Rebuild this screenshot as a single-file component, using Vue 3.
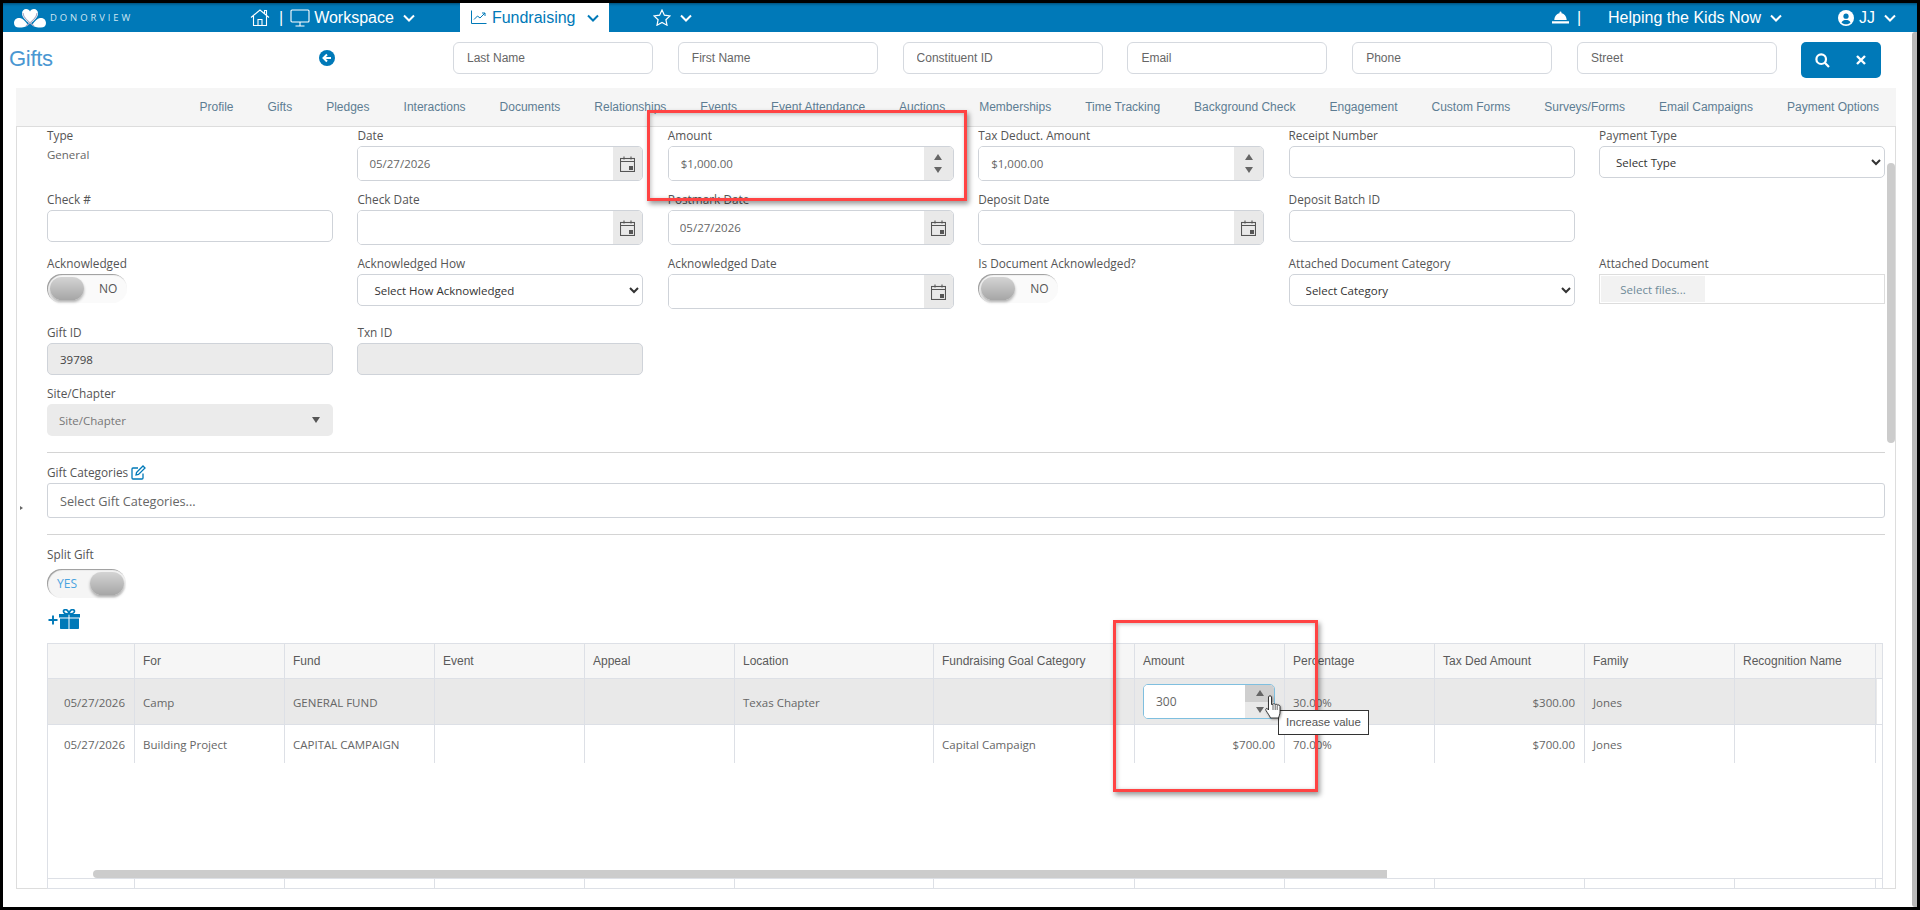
<script setup>
const searchFields = ['Last Name', 'First Name', 'Constituent ID', 'Email', 'Phone', 'Street'];

const tabs = [
  'Profile', 'Gifts', 'Pledges', 'Interactions', 'Documents', 'Relationships', 'Events',
  'Event Attendance', 'Auctions', 'Memberships', 'Time Tracking', 'Background Check',
  'Engagement', 'Custom Forms', 'Surveys/Forms', 'Email Campaigns', 'Payment Options',
];

const fields = [
  { label: 'Type', type: 'text', value: 'General' },
  { label: 'Date', type: 'date', value: '05/27/2026' },
  { label: 'Amount', type: 'spin', value: '$1,000.00' },
  { label: 'Tax Deduct. Amount', type: 'spin', value: '$1,000.00' },
  { label: 'Receipt Number', type: 'input', value: '' },
  { label: 'Payment Type', type: 'select', value: 'Select Type' },

  { label: 'Check #', type: 'input', value: '' },
  { label: 'Check Date', type: 'date', value: '' },
  { label: 'Postmark Date', type: 'date', value: '05/27/2026' },
  { label: 'Deposit Date', type: 'date', value: '' },
  { label: 'Deposit Batch ID', type: 'input', value: '' },
  { type: 'empty' },

  { label: 'Acknowledged', type: 'toggle', value: 'NO' },
  { label: 'Acknowledged How', type: 'select', value: 'Select How Acknowledged' },
  { label: 'Acknowledged Date', type: 'date', value: '' },
  { label: 'Is Document Acknowledged?', type: 'toggle', value: 'NO' },
  { label: 'Attached Document Category', type: 'select', value: 'Select Category' },
  { label: 'Attached Document', type: 'file' },

  { label: 'Gift ID', type: 'disabled', value: '39798' },
  { label: 'Txn ID', type: 'disabled', value: '' },
  { type: 'empty' }, { type: 'empty' }, { type: 'empty' }, { type: 'empty' },

  { label: 'Site/Chapter', type: 'site', value: 'Site/Chapter' },
];

const columns = ['', 'For', 'Fund', 'Event', 'Appeal', 'Location', 'Fundraising Goal Category', 'Amount', 'Percentage', 'Tax Ded Amount', 'Family', 'Recognition Name'];

const rows = [
  ['05/27/2026', 'Camp', 'GENERAL FUND', '', '', 'Texas Chapter', '', '', '30.00%', '$300.00', 'Jones', ''],
  ['05/27/2026', 'Building Project', 'CAPITAL CAMPAIGN', '', '', '', 'Capital Campaign', '$700.00', '70.00%', '$700.00', 'Jones', ''],
];

const rightAligned = [0, 7, 9];
</script>

<template>
  <div class="frame">
    <div class="screen">
      <nav class="nav">
        <div class="logo">
          <svg width="34" height="20" viewBox="0 0 34 20">
            <path d="M17 16C12 12 9 9 9 5.500C9 2.500 11 1 13 1C15 1 16.500 2 17 3.500C17.500 2 19 1 21 1C23 1 25 2.500 25 5.500C25 9 22 12 17 16Z" fill="#fff" />
            <path d="M1 15C1 11.500 4 9.500 7 10C10 10.500 12 13 15 17C13 19 10 19.500 6 19.500C3 19.500 1 18 1 15ZM33 15C33 11.500 30 9.500 27 10C24 10.500 22 13 19 17C21 19 24 19.500 28 19.500C31 19.500 33 18 33 15Z" fill="#fff" />
            <path d="M10 5C10 9 14 13 21 18M24 5C24 9 20 13 13 18" fill="none" stroke="#a9a9c4" stroke-width="1.100" />
          </svg>
          <span class="logo-text">DONORVIEW</span>
        </div>

        <svg class="home" width="20" height="19" viewBox="0 0 20 19" fill="none" stroke="#fff" stroke-width="1.100">
          <path d="M1 9.500L10 2L19 9.500M3.500 8V17.500H16.500V8M8 17.500V11.500H12V17.500M14.500 5.500V2.500H16.500V7" />
        </svg>
        <span class="sep">|</span>
        <svg class="monitor" width="20" height="18" viewBox="0 0 20 18" fill="none" stroke="#fff" stroke-width="1.100">
          <rect x="1" y="1" width="18" height="12" rx="1" />
          <path d="M10 13V16.500M5.500 17H14.500" />
        </svg>
        <span class="nav-text workspace">Workspace</span>
        <svg class="chev" width="12" height="8" viewBox="0 0 12 8"><path d="M1 1.500L6 6.500L11 1.500" fill="none" stroke="#fff" stroke-width="2" /></svg>

        <div class="active">
          <svg width="16" height="15" viewBox="0 0 16 15" fill="none" stroke="#0079b8" stroke-width="1">
            <path d="M.500 .500V13.500H15.500M3 9.500L6.500 6L9 8L14 3M11 3H14V6" />
          </svg>
          <span class="active-text">Fundraising</span>
          <svg width="12" height="8" viewBox="0 0 12 8"><path d="M1 1.500L6 6.500L11 1.500" fill="none" stroke="#0079b8" stroke-width="2" /></svg>
        </div>

        <svg class="star" width="18" height="17" viewBox="0 0 18 17">
          <path d="M9 1L11.400 6.200L17 6.900L12.900 10.700L14 16.200L9 13.500L4 16.200L5.100 10.700L1 6.900L6.600 6.200Z" fill="none" stroke="#fff" stroke-width="1.200" />
        </svg>
        <svg class="chev star-chev" width="12" height="8" viewBox="0 0 12 8"><path d="M1 1.500L6 6.500L11 1.500" fill="none" stroke="#fff" stroke-width="2" /></svg>

        <div class="nav-right">
          <svg width="17" height="13" viewBox="0 0 17 13" fill="#fff">
            <path d="M7.500 1.500a1 1 0 0 1 2 0V2.200C12.500 2.800 14.500 5.500 14.700 9H2.300C2.500 5.500 4.500 2.800 7.500 2.200ZM0 10.200H17V12.500H0Z" />
          </svg>
          <span class="sep right-sep">|</span>
          <span class="nav-text org">Helping the Kids Now</span>
          <svg class="chev" width="12" height="8" viewBox="0 0 12 8"><path d="M1 1.500L6 6.500L11 1.500" fill="none" stroke="#fff" stroke-width="2" /></svg>
          <svg class="user" width="16" height="16" viewBox="0 0 16 16">
            <circle cx="8" cy="8" r="8" fill="#fff" />
            <circle cx="8" cy="6.200" r="2.600" fill="#0079b8" />
            <path d="M3.500 12.500C4.500 10.500 6 10 8 10C10 10 11.500 10.500 12.500 12.500C11.500 13.700 10 14.300 8 14.300C6 14.300 4.500 13.700 3.500 12.500Z" fill="#0079b8" />
          </svg>
          <span class="nav-text jj">JJ</span>
          <svg class="chev" width="12" height="8" viewBox="0 0 12 8"><path d="M1 1.500L6 6.500L11 1.500" fill="none" stroke="#fff" stroke-width="2" /></svg>
        </div>
      </nav>

      <header class="head">
        <h1 class="title">Gifts</h1>
        <svg class="back" width="16" height="16" viewBox="0 0 16 16">
          <circle cx="8" cy="8" r="8" fill="#0079b8" />
          <path d="M12 8H5M8 4.500L4.500 8L8 11.500" fill="none" stroke="#fff" stroke-width="2" />
        </svg>
        <div class="search">
          <input v-for="name in searchFields" :key="name" class="search-input" :placeholder="name" />
        </div>
        <div class="search-btn">
          <svg width="15" height="15" viewBox="0 0 15 15" fill="none" stroke="#fff" stroke-width="2.200">
            <circle cx="6.200" cy="6.200" r="4.800" />
            <path d="M9.800 9.800L14 14" />
          </svg>
          <svg width="10" height="10" viewBox="0 0 10 10" fill="none" stroke="#fff" stroke-width="2.400">
            <path d="M1 1L9 9M9 1L1 9" />
          </svg>
        </div>
      </header>

      <div class="tabs">
        <span v-for="tab in tabs" :key="tab" class="tab">{{ tab }}</span>
      </div>

      <main class="panel">
        <span class="expander"></span>
        <div class="form">
          <div v-for="(field, i) in fields" :key="i" class="field">
            <template v-if="field.type !== 'empty'">
              <label class="label">{{ field.label }}</label>

              <div v-if="field.type === 'text'" class="static">{{ field.value }}</div>

              <input v-else-if="field.type === 'input'" class="ctl" :value="field.value" />

              <input v-else-if="field.type === 'disabled'" class="ctl disabled" :value="field.value" />

              <select v-else-if="field.type === 'select'" class="ctl sel">
                <option>{{ field.value }}</option>
              </select>

              <div v-else-if="field.type === 'date'" class="group">
                <input class="group-input" :value="field.value" />
                <span class="addon">
                  <svg width="15" height="16" viewBox="0 0 15 16" fill="none" stroke="#555" stroke-width="1.100">
                    <rect x=".5" y="2.500" width="14" height="13" />
                    <path d="M.5 5.500H14.500M4 .5V3.500M11 .5V3.500" />
                    <rect x="9" y="10" width="4" height="4" fill="#555" stroke="none" />
                  </svg>
                </span>
              </div>

              <div v-else-if="field.type === 'spin'" class="group">
                <input class="group-input money" :value="field.value" />
                <span class="addon spin">
                  <i class="up"></i>
                  <i class="down"></i>
                </span>
              </div>

              <div v-else-if="field.type === 'toggle'" class="toggle">
                <span class="knob"></span>
                <span class="toggle-text">{{ field.value }}</span>
              </div>

              <div v-else-if="field.type === 'file'" class="file">
                <span class="file-btn">Select files...</span>
              </div>

              <div v-else-if="field.type === 'site'" class="site">
                <span>{{ field.value }}</span>
                <i class="down site-arrow"></i>
              </div>
            </template>
          </div>
        </div>

        <hr class="rule rule-first" />

        <label class="label cat-label">
          Gift Categories
          <svg width="15" height="15" viewBox="0 0 15 15" fill="none" stroke="#0079b8" stroke-width="1.300">
            <path d="M12 8.500V13C12 13.600 11.600 14 11 14H2C1.400 14 1 13.600 1 13V4C1 3.400 1.400 3 2 3H7" />
            <path d="M5.500 7.500L12 1L14 3L7.500 9.500L5 10Z" />
          </svg>
        </label>
        <input class="ctl cat-input" placeholder="Select Gift Categories..." />

        <hr class="rule" />

        <label class="label split-label">Split Gift</label>
        <div class="toggle toggle-on">
          <span class="toggle-yes">YES</span>
          <span class="knob"></span>
        </div>

        <svg class="add-gift" width="32" height="20" viewBox="0 0 32 20" fill="#0079b8">
          <path d="M.5 11H9.500M5 6.500V15.500" fill="none" stroke="#0079b8" stroke-width="1.900" />
          <path d="M11 5H20.500V8.500H11ZM21.500 5H32V8.500H21.500ZM12 9.500H20.500V20H13C12.400 20 12 19.600 12 19ZM21.500 9.500H31V19C31 19.600 30.600 20 30 20H21.500Z" />
          <path d="M21 5C18 5 15.500 3.800 15.500 2.300C15.500 1.100 16.500 .7 17.500 .7C19.500 .7 20.500 2.500 21 5C21.500 2.500 22.500 .7 24.500 .7C25.500 .7 26.500 1.100 26.500 2.300C26.500 3.800 24 5 21 5" fill="none" stroke="#0079b8" stroke-width="1.700" />
        </svg>

        <div class="grid">
          <div class="grid-row grid-head">
            <div v-for="col in columns" :key="col" class="cell">{{ col }}</div>
            <div class="gutter"></div>
          </div>
          <div v-for="(row, r) in rows" :key="r" class="grid-row" :class="r === 0 ? 'row-edit' : 'row-plain'">
            <div v-for="(val, c) in row" :key="c" class="cell" :class="{ right: rightAligned.includes(c) }">
              <div v-if="r === 0 && c === 7" class="editor">
                <input class="editor-input" value="300" />
                <span class="editor-spin">
                  <span class="editor-up"><i class="up"></i></span>
                  <span class="editor-down"><i class="down"></i></span>
                </span>
              </div>
              <template v-else>{{ val }}</template>
            </div>
          </div>
          <div class="grid-fill"></div>
          <div class="grid-row grid-foot">
            <div v-for="col in columns" :key="col" class="cell"></div>
            <div class="gutter"></div>
          </div>
          <div class="hscroll"></div>
        </div>
      </main>

      <div class="vscroll-inner"></div>
      <div class="vscroll-main"></div>

      <div class="callout callout-form"></div>
      <div class="callout callout-table"></div>

      <div class="tooltip">Increase value</div>
      <svg class="hand" width="16" height="24" viewBox="0 0 16 24">
        <path d="M3.500 2C3.500 .4 6.500 .4 6.500 2V9.500L8 9.300C8.600 8.500 9.800 8.600 10.200 9.600C10.800 9 11.900 9.100 12.200 10.100C13 9.700 15 10 15 11.500V17C15 19.500 14 21 13.500 23H5.500C4.500 20.500 2.500 18 1 15.500C.2 14 1.500 12.800 2.500 13.800L3.500 15Z" fill="#fff" stroke="#222" stroke-width=".9" stroke-linejoin="round" />
        <path d="M8 10V15M10.200 10V15M12.200 10.500V15" fill="none" stroke="#222" stroke-width=".7" />
      </svg>
    </div>
  </div>
</template>

<style>
html, body {
  margin: 0;
  overflow: hidden;
  background: #000;
}
</style>

<style scoped>
.frame {
  width: 1920px;
  height: 910px;
  box-sizing: border-box;
  padding: 3px;
  background: #000;
  overflow: hidden;
}
.screen {
  position: relative;
  width: 1914px;
  height: 904px;
  background: #fff;
  overflow: hidden;
  font-family: "Open Sans", sans-serif;
  font-size: 11.5px;
  color: #666;
}
i {
  display: block;
}

/* top bar */
.nav {
  height: 29px;
  background: #0079b8;
  display: flex;
  align-items: center;
  color: #fff;
  font-family: "Liberation Sans", Arial, sans-serif;
  box-shadow: inset 0 3px 3px -2px rgba(0, 0, 0, .4);
}
.logo {
  width: 239px;
  padding-left: 10px;
  box-sizing: border-box;
  display: flex;
  align-items: center;
  gap: 3px;
  flex: none;
}
.logo-text {
  font-family: "Open Sans", sans-serif;
  font-size: 9.500px;
  letter-spacing: 2.900px;
  color: #cfe6f2;
}
.home {
  margin-left: 8px;
}
.sep {
  font-size: 16px;
  margin-left: 9px;
}
.monitor {
  margin-left: 7px;
}
.nav-text {
  font-size: 16px;
  white-space: nowrap;
}
.workspace {
  margin-left: 4px;
}
.chev {
  margin-left: 9px;
  flex: none;
}
.active {
  width: 149px;
  height: 29px;
  margin-left: 45px;
  padding-left: 11px;
  box-sizing: border-box;
  background: #fff;
  display: flex;
  align-items: center;
  color: #0079b8;
  font-size: 16px;
}
.active-text {
  margin: 0 11px 0 5px;
}
.star {
  margin-left: 44px;
}
.star-chev {
  margin-left: 9px;
}
.nav-right {
  margin-left: auto;
  margin-right: 21px;
  display: flex;
  align-items: center;
}
.right-sep {
  margin-left: 8px;
}
.org {
  margin-left: 27px;
}
.user {
  margin-left: 56px;
}
.jj {
  margin-left: 5px;
}

/* search header */
.head {
  height: 56px;
  padding-top: 10px;
  box-sizing: border-box;
  display: flex;
  align-items: flex-start;
  font-family: "Liberation Sans", Arial, sans-serif;
}
.title {
  margin: 4px 0 0 6px;
  width: 310px;
  font-size: 22px;
  font-weight: 400;
  line-height: 26px;
  letter-spacing: -.3px;
  color: #4a97d2;
}
.back {
  margin-top: 8px;
}
.search {
  margin-left: 118px;
  display: flex;
  gap: 24.800px;
}
.search-input {
  width: 200px;
  height: 32px;
  box-sizing: border-box;
  padding: 0 13px;
  border: 1px solid #d5d9df;
  border-radius: 6px;
  font: 12px "Liberation Sans", Arial, sans-serif;
  outline: none;
}
.search-input::placeholder {
  color: #666;
  opacity: 1;
}
.search-btn {
  width: 80px;
  height: 36px;
  margin-left: 24px;
  border-radius: 5px;
  background: #0079b8;
  display: flex;
  align-items: center;
  justify-content: center;
  gap: 26px;
}

/* tabs */
.tabs {
  height: 39px;
  margin: 0 21px 0 13px;
  padding: 0 17px 0 0;
  box-sizing: border-box;
  background: #f5f5f5;
  border-bottom: 1px solid #ddd;
  display: flex;
  align-items: center;
  justify-content: flex-end;
  gap: 34px;
  font-family: "Liberation Sans", Arial, sans-serif;
  font-size: 12px;
  color: #5d7d93;
}
.tab {
  white-space: nowrap;
}

/* panel */
.panel {
  position: relative;
  height: 762px;
  margin: 0 21px 0 13px;
  padding-left: 30px;
  padding-right: 10px;
  box-sizing: border-box;
  border: 1px solid #ddd;
  border-top: 0;
}
.expander {
  position: absolute;
  left: 3px;
  top: 379px;
  border-left: 3px solid #666;
  border-top: 2px solid transparent;
  border-bottom: 2px solid transparent;
}
.form {
  display: grid;
  grid-template-columns: repeat(6, 1fr);
  grid-template-rows: 64px 64px 69px 61px auto;
  column-gap: 24.400px;
  height: 309px;
}
.label {
  display: block;
  height: 16px;
  margin-bottom: 3px;
  line-height: 16px;
  font-size: 11.800px;
  font-weight: 500;
  color: #555;
  white-space: nowrap;
}
.static {
  line-height: 17px;
}
.ctl {
  display: block;
  width: 100%;
  height: 32px;
  box-sizing: border-box;
  padding: 0 12px;
  background: #fff;
  border: 1px solid #cfd3d9;
  border-radius: 5px;
  font: 11.500px "Open Sans", sans-serif;
  color: #444;
  outline: none;
}
.sel {
  padding-left: 12px;
  color: #333;
}
.disabled {
  background: #ebebeb;
}
.group {
  display: flex;
  height: 35px;
  box-sizing: border-box;
  border: 1px solid #cfd3d9;
  border-radius: 5px;
  overflow: hidden;
  background: #fff;
}
.group-input {
  flex: 1;
  min-width: 0;
  padding: 0 11px;
  border: 0;
  outline: none;
  font: 11.500px "Open Sans", sans-serif;
  color: #666;
}
.money {
  padding-left: 12px;
}
.addon {
  flex: none;
  width: 29px;
  background: #e9e9e9;
  display: flex;
  align-items: center;
  justify-content: center;
}
.spin {
  flex-direction: column;
  gap: 7px;
}
.up {
  width: 0;
  border-left: 4.500px solid transparent;
  border-right: 4.500px solid transparent;
  border-bottom: 6px solid #666;
}
.down {
  width: 0;
  border-left: 4.500px solid transparent;
  border-right: 4.500px solid transparent;
  border-top: 6px solid #666;
}
.toggle {
  width: 80px;
  height: 29px;
  margin-top: 1px;
  box-sizing: border-box;
  padding: 3px;
  border-radius: 15px;
  background: #fafafa;
  box-shadow: inset 1px 1px 1px #999;
  display: flex;
  align-items: center;
  gap: 15px;
}
.knob {
  width: 34px;
  height: 23px;
  flex: none;
  border-radius: 12px;
  background: linear-gradient(#d4d4d4, #a6a6a6);
  box-shadow: 0 2px 3px rgba(0, 0, 0, .3);
}
.toggle-text {
  font-size: 12px;
  color: #555;
}
.file {
  height: 30px;
  box-sizing: border-box;
  padding: 1px;
  border: 1px solid #ddd;
}
.file-btn {
  display: flex;
  align-items: center;
  justify-content: center;
  width: 104px;
  height: 100%;
  background: #f2f2f2;
  color: #6f8a98;
}
.site {
  height: 32px;
  padding: 0 12px;
  border-radius: 5px;
  background: #ebebeb;
  display: flex;
  align-items: center;
  justify-content: space-between;
  color: #777;
}
.site-arrow {
  border-top-color: #555;
  margin-right: 1px;
}

.rule {
  margin: 0;
  border: 0;
  border-top: 1px solid #d4d4d4;
}
.rule-first {
  margin-top: 16px;
}
.cat-label {
  margin: 11px 0 3px;
  display: flex;
  align-items: center;
  gap: 3px;
}
.cat-input {
  height: 35px;
  margin-bottom: 16px;
  border-radius: 3px;
  font-size: 12.700px;
}
.cat-input::placeholder {
  color: #666;
  opacity: 1;
}
.split-label {
  margin: 11px 0 7px;
}
.toggle-on {
  width: 79px;
  margin-top: 0;
  padding-left: 10px;
  gap: 9px;
  background: #f5f5f5;
  color: #4aa3e0;
  font-size: 12px;
}
.toggle-yes {
  width: 24px;
  flex: none;
}
.add-gift {
  display: block;
  margin: 11px 0 14px 1px;
}

/* split table */
.grid {
  position: relative;
  height: 246px;
  display: flex;
  flex-direction: column;
  border: 1px solid #dde0e6;
  box-sizing: border-box;
  margin-right: 2px;
}
.grid-row {
  display: grid;
  grid-template-columns: 87px 150px 150px 150px 150px 199px 201px 150px 150px 150px 150px 141px 8px;
  flex: none;
}
.grid-head {
  height: 34px;
  background: #f6f6f6;
  border-bottom: 1px solid #dde0e6;
  font-family: "Liberation Sans", Arial, sans-serif;
  font-size: 12px;
  color: #5a5a5a;
}
.row-edit {
  height: 46px;
  border-bottom: 1px solid #dde0e6;
  background: linear-gradient(to right, #e9e9e9 1829px, #fff 1829px);
  box-sizing: border-box;
}
.row-plain {
  height: 38px;
}
.cell {
  display: flex;
  align-items: center;
  min-width: 0;
  padding: 0 9px 0 8px;
  box-sizing: border-box;
  border-right: 1px solid #dde0e6;
  white-space: nowrap;
  font-size: inherit;
}
.row-edit .cell,
.row-plain .cell {
  font-size: 11.500px;
  color: #666;
}
.row-edit .cell {
  padding-top: 2px;
}
.right {
  justify-content: flex-end;
}
.gutter {
  width: 8px;
}
.grid-fill {
  flex: 1;
}
.grid-foot {
  height: 10px;
  border-top: 1px solid #dde0e6;
  box-sizing: border-box;
}
.hscroll {
  position: absolute;
  left: 45px;
  bottom: 10px;
  width: 1294px;
  height: 8px;
  border-radius: 4px 0 0 4px;
  background: #ccc;
}
.editor {
  flex: 1;
  height: 35px;
  margin-top: -2px;
  box-sizing: border-box;
  display: flex;
  overflow: hidden;
  border: 1px solid #7fbfdf;
  border-radius: 5px;
  background: #fff;
}
.editor-input {
  flex: 1;
  min-width: 0;
  padding: 0 12px;
  border: 0;
  outline: none;
  font: 12px "Open Sans", sans-serif;
  color: #666;
}
.editor-spin {
  flex: none;
  width: 29px;
  display: flex;
  flex-direction: column;
}
.editor-up,
.editor-down {
  flex: 1;
  display: flex;
  align-items: center;
  justify-content: center;
}
.editor-up {
  background: #cfcfcf;
}
.editor-down {
  background: #e9e9e9;
}

/* scrollbars and annotations */
.vscroll-inner {
  position: absolute;
  left: 1884px;
  top: 160px;
  width: 8px;
  height: 280px;
  border-radius: 4px;
  background: #ccc;
}
.vscroll-main {
  position: absolute;
  left: 1909px;
  top: 29px;
  width: 5px;
  height: 875px;
  border-radius: 3px 0 0 3px;
  background: #b8b8b8;
}
.callout {
  position: absolute;
  box-sizing: border-box;
  border: 3px solid #ff4343;
  box-shadow: 2px 3px 5px rgba(0, 0, 0, .4), inset 1px 1px 4px rgba(0, 0, 0, .25);
}
.callout-form {
  left: 644px;
  top: 107px;
  width: 320px;
  height: 91px;
}
.callout-table {
  left: 1110px;
  top: 617px;
  width: 205px;
  height: 172px;
}
.tooltip {
  position: absolute;
  left: 1275px;
  top: 707px;
  width: 91px;
  height: 25px;
  box-sizing: border-box;
  border: 1px solid #333;
  background: #fff;
  font-family: "Liberation Sans", Arial, sans-serif;
  font-size: 11.500px;
  line-height: 23px;
  text-align: center;
  color: #555;
}
.hand {
  position: absolute;
  left: 1262px;
  top: 692px;
  filter: drop-shadow(1px 1px 1px rgba(0, 0, 0, .35));
}
</style>
